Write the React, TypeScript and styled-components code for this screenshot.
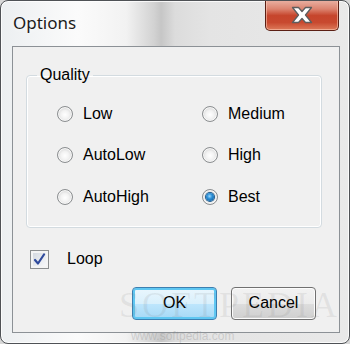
import React from "react";
import styled, { createGlobalStyle } from "styled-components";

const Global = createGlobalStyle`
  html, body { margin: 0; padding: 0; background: #d8d8d8; }
  body { width: 350px; height: 344px; overflow: hidden; }
`;

const Window = styled.div`
  position: relative;
  box-sizing: border-box;
  width: 350px;
  height: 344px;
  border: 1px solid #4f5256;
  border-radius: 8px;
  overflow: hidden;
  display: flex;
  flex-direction: column;
  background:
    linear-gradient(90deg, #eceff1 0%, #fbfbfb 22%, #f2f2f2 36%, #d2d2d2 44%, #c6c6c6 46%, #dcdcdc 50%, #e4e4e4 60%, #e9e9e9 100%);
  box-shadow: inset 0 0 0 1px rgba(255,255,255,0.8);
`;

const TitleBar = styled.div`
  height: 45px;
  display: flex;
  justify-content: space-between;
  align-items: flex-start;
  flex-shrink: 0;
`;

const Title = styled.div`
  padding: 12px 0 0 12px;
  font-family: "Noto Sans", "Liberation Sans", sans-serif;
  font-size: 17px;
  line-height: 20px;
  color: #1c1c1c;
  text-shadow: 0 0 6px rgba(255,255,255,0.9);
`;

const CloseButton = styled.div`
  box-sizing: border-box;
  width: 74px;
  height: 31px;
  margin: -1px 10px 0 0;
  border: 1px solid #5b1f14;
  border-top: none;
  border-radius: 0 0 5px 5px;
  background: linear-gradient(180deg, #eab3a5 0%, #dc8470 30%, #c6452c 52%, #c8492f 75%, #dd7a5a 100%);
  box-shadow: inset 0 0 0 1px rgba(255, 210, 190, 0.55);
  display: flex;
  align-items: center;
  justify-content: center;
`;

const Client = styled.div`
  flex: 1;
  margin: 0 9px 10px 11px;
  border: 1px solid #8c9196;
  background: #f0f0f0;
  display: flex;
  flex-direction: column;
  font-family: "Liberation Sans", Arial, sans-serif;
  font-size: 16px;
  color: #000;
`;

const Group = styled.fieldset`
  box-sizing: border-box;
  width: 296px;
  margin: 19px 0 0 13px;
  padding: 9px 0 9px 30px;
  border: 1px solid #d3dbe0;
  border-radius: 4px;
  box-shadow: inset 0 0 0 1px #ffffff;
  min-width: 0;
`;

const Legend = styled.legend`
  margin-left: -20px;
  padding: 0 3px;
  line-height: 18px;
`;

const Grid = styled.div`
  display: grid;
  grid-template-columns: 145px 1fr;
  grid-auto-rows: 41.5px;
  align-items: center;
`;

const Option = styled.label`
  display: flex;
  align-items: center;
  gap: 10px;
  line-height: 18px;
`;

const Radio = styled.span<{ $checked?: boolean }>`
  box-sizing: border-box;
  width: 16px;
  height: 16px;
  border-radius: 50%;
  border: 1px solid #8b8e90;
  background: radial-gradient(circle at 50% 55%, #ffffff 0%, #f2f2f2 40%, #d6d6d6 75%, #c8c8c8 100%);
  box-shadow: inset 0 0 0 1px #f8f8f8;
  display: flex;
  align-items: center;
  justify-content: center;
  flex-shrink: 0;
  &::after {
    content: "";
    display: ${(p) => (p.$checked ? "block" : "none")};
    width: 8px;
    height: 8px;
    border-radius: 50%;
    background: radial-gradient(circle at 45% 40%, #9ad8ff 0%, #2b8fd6 40%, #0a4f8f 100%);
    box-shadow: 0 0 0 1px #1d5a8c;
  }
`;

const CheckRow = styled.label`
  display: flex;
  align-items: center;
  gap: 18px;
  margin: 22px 0 0 17px;
  line-height: 18px;
`;

const CheckBox = styled.span`
  box-sizing: border-box;
  width: 19px;
  height: 19px;
  border: 1px solid #8b8e90;
  background: linear-gradient(135deg, #cfd5dd 0%, #e6e9ee 50%, #fbfbfc 100%);
  box-shadow: inset 0 0 0 2px #f4f4f4;
  display: flex;
  align-items: center;
  justify-content: center;
`;

const Buttons = styled.div`
  display: flex;
  justify-content: flex-end;
  gap: 14px;
  margin: 18px 23px 0 0;
`;

const Button = styled.div<{ $default?: boolean }>`
  box-sizing: border-box;
  width: 85px;
  height: 33px;
  border-radius: 4px;
  border: 1px solid ${(p) => (p.$default ? "#3c7fb1" : "#707070")};
  background: ${(p) =>
    p.$default
      ? "linear-gradient(180deg, #eaf6fd 0%, #d9f0fc 50%, #bee6fd 51%, #a7d9f5 100%)"
      : "linear-gradient(180deg, #f2f2f2 0%, #ebebeb 50%, #dddddd 51%, #cfcfcf 100%)"};
  box-shadow: ${(p) =>
    p.$default ? "inset 0 0 0 2px #5fc7f2" : "inset 0 0 0 1px #fcfcfc"};
  display: flex;
  align-items: center;
  justify-content: center;
  line-height: 18px;
`;

const Watermark = styled.div`
  position: absolute;
  left: 118px;
  top: 283px;
  font-family: "Liberation Serif", serif;
  font-size: 36px;
  letter-spacing: 3px;
  color: rgba(120, 120, 120, 0.12);
  pointer-events: none;
`;

const WatermarkUrl = styled.div`
  position: absolute;
  left: 130px;
  top: 329px;
  font-family: "Liberation Sans", sans-serif;
  font-size: 12px;
  line-height: 13px;
  color: rgba(120, 120, 120, 0.25);
  pointer-events: none;
`;

const options: [string, boolean][] = [
  ["Low", false],
  ["Medium", false],
  ["AutoLow", false],
  ["High", false],
  ["AutoHigh", false],
  ["Best", true],
];

export default function App() {
  return (
    <>
      <Global />
      <Window>
        <TitleBar>
          <Title>Options</Title>
          <CloseButton>
            <svg width="24" height="18" viewBox="0 0 24 18">
              <path
                d="M2.5 1.5 L8.5 1.5 L12 5.5 L15.5 1.5 L21.5 1.5 L15.5 9 L21.5 16.5 L15.5 16.5 L12 12.5 L8.5 16.5 L2.5 16.5 L8.5 9 Z"
                fill="#ffffff"
                stroke="#5e5e5e"
                strokeWidth="1.3"
                strokeLinejoin="round"
              />
            </svg>
          </CloseButton>
        </TitleBar>
        <Client>
          <Group>
            <Legend>Quality</Legend>
            <Grid>
              {options.map(([label, checked]) => (
                <Option key={label}>
                  <Radio $checked={checked} />
                  {label}
                </Option>
              ))}
            </Grid>
          </Group>
          <CheckRow>
            <CheckBox>
              <svg width="13" height="13" viewBox="0 0 13 13">
                <path
                  d="M2 7 L5 10.5 L11 1.5"
                  fill="none"
                  stroke="#2f4a9c"
                  strokeWidth="2.2"
                  strokeLinecap="round"
                  strokeLinejoin="round"
                />
              </svg>
            </CheckBox>
            Loop
          </CheckRow>
          <Buttons>
            <Button $default>OK</Button>
            <Button>Cancel</Button>
          </Buttons>
        </Client>
        <Watermark>SOFTPEDIA</Watermark>
        <WatermarkUrl>www.softpedia.com</WatermarkUrl>
      </Window>
    </>
  );
}
